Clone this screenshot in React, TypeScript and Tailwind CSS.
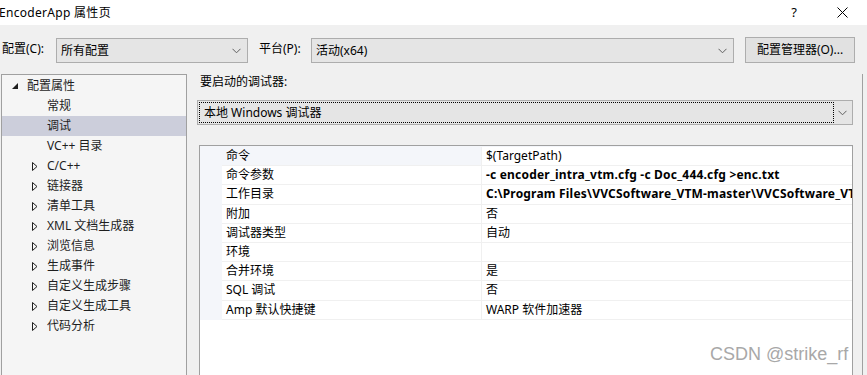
import React from 'react';

const font = { fontFamily: '"Noto Sans", "Noto Sans CJK SC", sans-serif' };

function Chevron() {
  return (
    <svg width="9" height="6" viewBox="0 0 9 6" className="shrink-0">
      <path d="M0.5 0.8 L4.5 4.8 L8.5 0.8" fill="none" stroke="#606060" strokeWidth="1" />
    </svg>
  );
}

function Collapsed() {
  return (
    <svg width="6" height="9" viewBox="0 0 6 9" className="shrink-0">
      <path d="M0.5 0.5 L5 4.5 L0.5 8.5 Z" fill="none" stroke="#1e1e1e" strokeWidth="1" />
    </svg>
  );
}

function Expanded() {
  return (
    <svg width="6" height="6" viewBox="0 0 6 6" className="shrink-0">
      <path d="M6 0 L6 6 L0 6 Z" fill="#1e1e1e" />
    </svg>
  );
}

type TreeItem = { label: string; level: 0 | 1; arrow?: 'open' | 'closed'; selected?: boolean };

const tree: TreeItem[] = [
  { label: '配置属性', level: 0, arrow: 'open' },
  { label: '常规', level: 1 },
  { label: '调试', level: 1, selected: true },
  { label: 'VC++ 目录', level: 1 },
  { label: 'C/C++', level: 1, arrow: 'closed' },
  { label: '链接器', level: 1, arrow: 'closed' },
  { label: '清单工具', level: 1, arrow: 'closed' },
  { label: 'XML 文档生成器', level: 1, arrow: 'closed' },
  { label: '浏览信息', level: 1, arrow: 'closed' },
  { label: '生成事件', level: 1, arrow: 'closed' },
  { label: '自定义生成步骤', level: 1, arrow: 'closed' },
  { label: '自定义生成工具', level: 1, arrow: 'closed' },
  { label: '代码分析', level: 1, arrow: 'closed' },
];

const props: { name: string; value: string; bold?: boolean }[] = [
  { name: '命令', value: '$(TargetPath)' },
  { name: '命令参数', value: '-c encoder_intra_vtm.cfg -c Doc_444.cfg >enc.txt', bold: true },
  { name: '工作目录', value: 'C:\\Program Files\\VVCSoftware_VTM-master\\VVCSoftware_VTM-master\\bin', bold: true },
  { name: '附加', value: '否' },
  { name: '调试器类型', value: '自动' },
  { name: '环境', value: '' },
  { name: '合并环境', value: '是' },
  { name: 'SQL 调试', value: '否' },
  { name: 'Amp 默认快捷键', value: 'WARP 软件加速器' },
];

export default function App() {
  return (
    <div className="relative w-[867px] h-[375px] overflow-hidden bg-[#f0f0f0] text-[12px] text-black" style={font}>
      {/* Title bar */}
      <div className="flex h-[25px] items-center bg-white">
        <span className="ml-[-1px] leading-none tracking-[0.3px]">EncoderApp 属性页</span>
        <span className="ml-auto mr-[40px] text-[13px] leading-none">?</span>
        <svg width="11" height="11" viewBox="0 0 11 11" className="mr-[19px]">
          <path d="M0.5 0.5 L10.5 10.5 M10.5 0.5 L0.5 10.5" stroke="#000" strokeWidth="1" />
        </svg>
      </div>

      {/* Configuration row */}
      <div className="flex h-[49px] items-start pt-[13px]">
        <span className="ml-[2px] mt-[5px] w-[54px] leading-none">配置(C):</span>
        <div className="flex h-[25px] w-[192px] items-center border border-[#adadad] bg-[#e5e5e5] pl-[4px] pr-[6px]">
          <span className="flex-1">所有配置</span>
          <Chevron />
        </div>
        <span className="ml-[11px] mt-[5px] w-[52px] leading-none">平台(P):</span>
        <div className="flex h-[25px] w-[423px] items-center border border-[#adadad] bg-[#e5e5e5] pl-[4px] pr-[6px]">
          <span className="flex-1">活动(x64)</span>
          <Chevron />
        </div>
        <div className="ml-[11px] mt-[-1px] flex h-[26px] w-[110px] items-center justify-center border border-[#adadad] bg-[#e1e1e1]">
          配置管理器(O)...
        </div>
      </div>

      <div className="flex h-[302px]">
        {/* Tree */}
        <div className="ml-[1px] h-full w-[186px] border border-b-0 border-[#a0a0a0] bg-[#f5f5f5] pt-[1px] text-[#1e1e1e]">
          {tree.map((t) => (
            <div
              key={t.label}
              className={`flex h-[20px] items-center ${t.selected ? 'bg-[#cccedb]' : ''} ${t.level === 0 ? 'pl-[10px]' : 'pl-[30px]'}`}
            >
              <div className="flex w-[15px] items-center">
                {t.arrow === 'open' && <Expanded />}
                {t.arrow === 'closed' && <Collapsed />}
              </div>
              <span>{t.label}</span>
            </div>
          ))}
        </div>

        {/* Right side */}
        <div className="ml-[10px] flex w-[656px] flex-col">
          <div className="ml-[3px] flex h-[16px] items-center">要启动的调试器:</div>
          <div className="mt-[10px] flex h-[25px] w-[656px] items-center border border-[#adadad] bg-[#e5e5e5] p-[1px]">
            <div className="flex h-full flex-1 items-center border border-dotted border-black pl-[4px]">
              本地 Windows 调试器
            </div>
            <div className="flex w-[17px] justify-center">
              <Chevron />
            </div>
          </div>

          <div className="ml-[2px] mt-[20px] flex-1 border border-b-0 border-[#a0a0a0] bg-white">
            <div className="flex bg-[#f4f6fa] h-[1px]" />
            {props.map((p, i) => (
              <div key={p.name} className="flex h-[19.2px]">
                <div className="w-[22px] bg-[#f4f6fa]" />
                <div
                  className={`flex w-[260px] items-center border-b border-r border-[#f0f0f0] pl-[4px] ${i === 0 ? 'bg-[#f4f6fa]' : ''}`}
                >
                  {p.name}
                </div>
                <div
                  className={`flex flex-1 items-center overflow-hidden whitespace-nowrap border-b border-[#f0f0f0] pl-[4px] ${p.bold ? 'font-bold tracking-[0.2px]' : ''}`}
                >
                  {p.value}
                </div>
              </div>
            ))}
          </div>
        </div>

        <div className="ml-[9px] h-full w-px bg-[#a0a0a0]" />
      </div>

      {/* Watermark */}
      <div
        className="absolute left-[710px] top-[345px] text-[18px] leading-none text-[#a8a8a8]"
        style={{ fontFamily: '"Liberation Sans", Arial, sans-serif' }}
      >
        CSDN @strike_rf
      </div>
    </div>
  );
}
